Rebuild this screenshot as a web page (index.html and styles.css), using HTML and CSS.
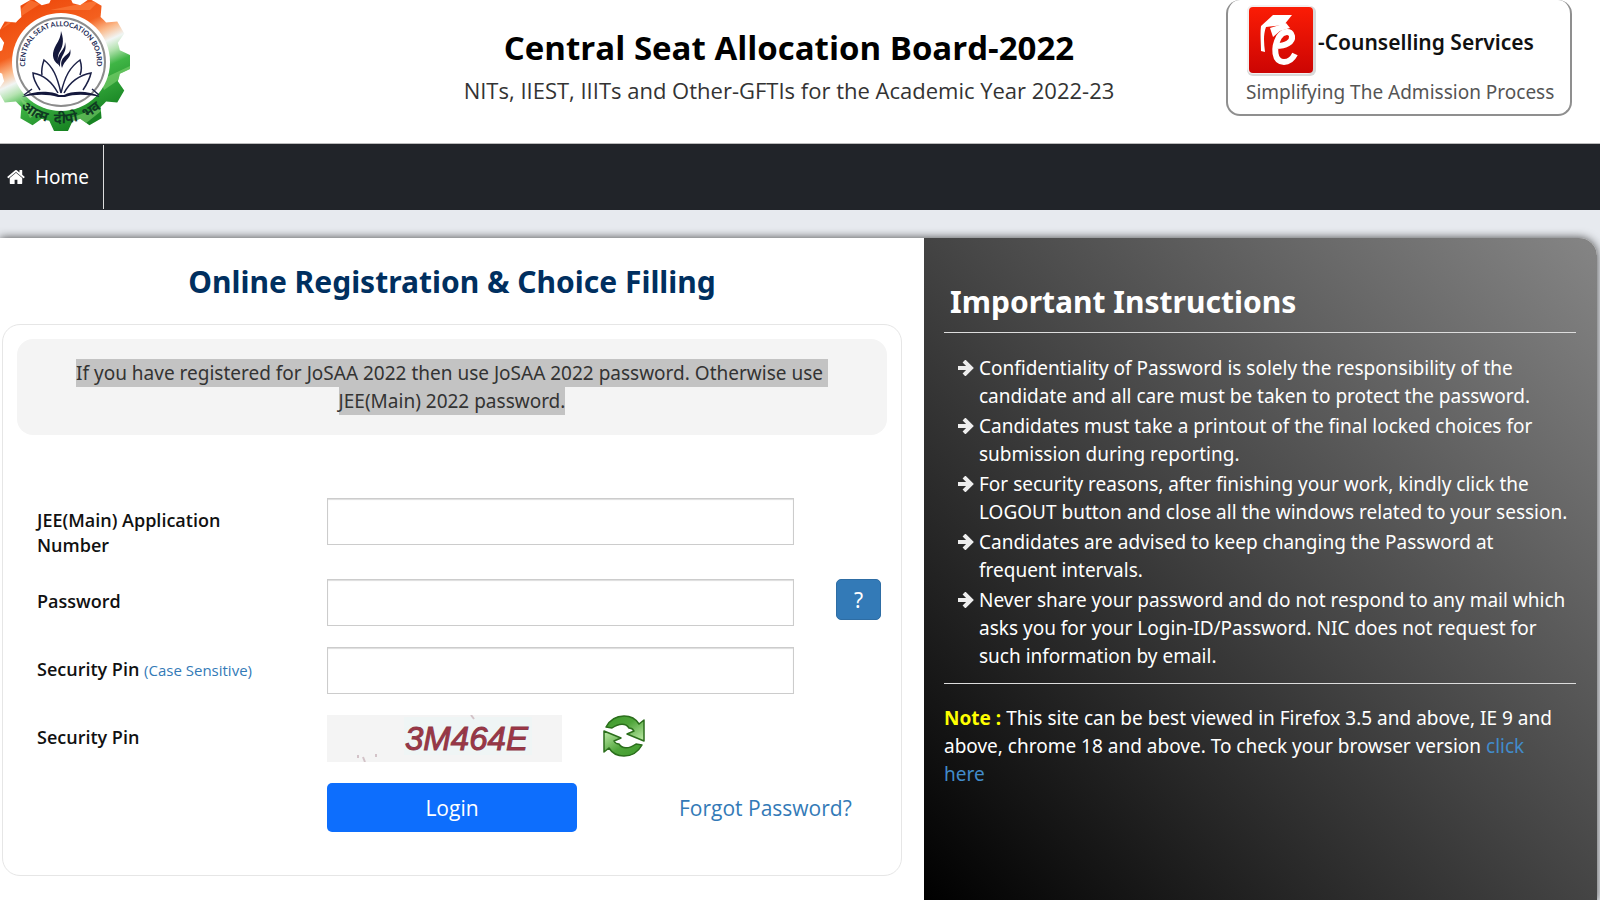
FILE: index.html
```
<!DOCTYPE html>
<html lang="en">

<head>
    <meta charset="UTF-8">
    <title>Central Seat Allocation Board-2022</title>
    <link rel="stylesheet" href="styles.css">
</head>

<body>
<header class="header">
    <svg class="logo" viewBox="0 0 132 132" role="img" aria-label="Central Seat Allocation Board">
        <defs>
            <linearGradient id="tricolor" gradientUnits="userSpaceOnUse" x1="34" y1="3" x2="88" y2="121">
                <stop offset="0" stop-color="#ee4a0c"/>
                <stop offset=".3" stop-color="#f4601f"/>
                <stop offset=".41" stop-color="#fbb98a"/>
                <stop offset=".5" stop-color="#f1f5f4"/>
                <stop offset=".58" stop-color="#b4e3b0"/>
                <stop offset=".68" stop-color="#3fb545"/>
                <stop offset="1" stop-color="#178322"/>
            </linearGradient>
            <path id="tooth" d="M47 8L54 -7H68L75 8Z"/>
            <clipPath id="gear">
                <circle cx="61" cy="62" r="60"/>
                <use href="#tooth"/>
                <use href="#tooth" transform="rotate(30 61 62)"/>
                <use href="#tooth" transform="rotate(60 61 62)"/>
                <use href="#tooth" transform="rotate(90 61 62)"/>
                <use href="#tooth" transform="rotate(120 61 62)"/>
                <use href="#tooth" transform="rotate(150 61 62)"/>
                <use href="#tooth" transform="rotate(180 61 62)"/>
                <use href="#tooth" transform="rotate(210 61 62)"/>
                <use href="#tooth" transform="rotate(240 61 62)"/>
                <use href="#tooth" transform="rotate(270 61 62)"/>
                <use href="#tooth" transform="rotate(300 61 62)"/>
                <use href="#tooth" transform="rotate(330 61 62)"/>
            </clipPath>
            <path id="arc-top" d="M27 74A36 36 0 1 1 95 74"/>
            <path id="arc-bottom" d="M4 84A61 61 0 0 0 118 84"/>
        </defs>
        <g clip-path="url(#gear)">
            <rect x="-10" y="-10" width="142" height="144" fill="url(#tricolor)"/>
            <path d="M0 30L40 4L30 0ZM50 10L100 0L90 10Z" fill="#ff8a4a" opacity=".5"/>
            <path d="M100 80L130 66V72L104 90ZM20 98L40 112L30 118ZM70 118L110 104L80 128Z" fill="#8fdc7c" opacity=".5"/>
        </g>
        <circle cx="61" cy="62" r="49" fill="#fff"/>
        <circle cx="61" cy="62" r="44" fill="#fff" stroke="#8c8c8c" stroke-width="2"/>
        <text class="logo-ring"><textPath href="#arc-top" startOffset="50%">CENTRAL SEAT ALLOCATION BOARD</textPath></text>
        <text class="logo-motto"><textPath href="#arc-bottom" startOffset="50%">आत्म &nbsp;दीपो&nbsp; भव</textPath></text>
        <g fill="#14183c">
            <path d="M61 31C65 42 62 48 59 53C57 58 58 61 59 65C51 60 52 52 56 45C59 40 61 36 61 31Z"/>
            <path d="M65 42C67 49 64 53 62 57C60 61 60 63 60 67C56 61 58 56 61 52C64 48 65 46 65 42Z"/>
            <path d="M70 49C72 55 68 58 66 61C64 63 63 65 62 68C60 62 62 59 65 56C69 53 70 52 70 49Z"/>
            <path d="M22 97C34 90 52 91 59 95H64C72 91 88 90 101 97C86 94 74 94 65 97H58C48 94 36 94 22 97Z"/>
        </g>
        <g fill="none" stroke="#1c2147" stroke-width="1.500">
            <path d="M61 93C57 76 53 67 44 60C42 66 41 70 42 75M61 93C65 76 70 67 80 60C82 66 82 70 80 75"/>
            <path d="M58 93C52 82 44 75 33 73C33 78 36 84 40 90M64 93C70 82 80 75 91 73C90 78 87 84 83 90"/>
            <path d="M24 95L32 89M99 95L92 89"/>
        </g>
    </svg>

    <div class="titles">
        <h1>Central Seat Allocation Board-2022</h1>
        <p>NITs, IIEST, IIITs and Other-GFTIs for the Academic Year 2022-23</p>
    </div>

    <div class="counselling">
        <div class="counselling-name">
            <svg class="e-logo" viewBox="0 0 70 72" aria-hidden="true">
                <defs>
                    <linearGradient id="red" x1="0" y1="0" x2="0" y2="1">
                        <stop offset="0" stop-color="#fb1c05"/>
                        <stop offset="1" stop-color="#cc0503"/>
                    </linearGradient>
                </defs>
                <rect x="1" y="2" width="69" height="70" rx="6" fill="#d9d9d9"/>
                <rect x="1" y="1" width="66" height="69" rx="6" fill="#f3f0f0"/>
                <rect x="3" y="3" width="64" height="66" rx="4" fill="url(#red)"/>
                <path d="M15 22L27 11H46L38 21L20 23C17 31 18 40 19 48L15 47C15 39 14 30 15 22Z" fill="#fff"/>
                <path d="M24 24L40 19L44 24L34 27L27 33Z" fill="#fff"/>
                <path d="M30 42C40 42 47 38 46 32C45 26 37 27 33 33C27 44 28 58 38 58C44 58 47 54 49 50" fill="none" stroke="#fff" stroke-width="6"/>
            </svg>
            <span>-Counselling Services</span>
        </div>
        <div class="counselling-tag">Simplifying The Admission Process</div>
    </div>
</header>

<nav class="nav">
    <a href="#" class="nav-item">
        <svg class="home-icon" viewBox="64 250 1664 1290" aria-hidden="true">
            <path fill="#fff" d="M1472 992v480q0 26-19 45t-45 19h-384v-384h-256v384h-384q-26 0-45-19t-19-45v-480q0-1 .5-3t.5-3l575-474 575 474q1 2 1 6zm223-69l-62 74q-8 9-21 11h-3q-13 0-21-7l-692-577-692 577q-12 8-24 7-13-2-21-11l-62-74q-8-10-7-23.500t11-21.500l719-599q32-26 76-26t76 26l244 204v-195q0-14 9-23t23-9h192q14 0 23 9t9 23v408l219 182q10 8 11 21.500t-7 23.500z"/>
        </svg>
        Home
    </a>
</nav>

<main class="main">
    <section class="login">
        <h2>Online Registration &amp; Choice Filling</h2>
        <div class="panel">
            <p class="hint"><mark>If you have registered for JoSAA 2022 then use JoSAA 2022 password. Otherwise use&nbsp; JEE(Main) 2022 password.</mark></p>
            <form class="form">
                <div class="row">
                    <label for="appno">JEE(Main) Application<br>Number</label>
                    <input type="text" id="appno">
                </div>
                <div class="row">
                    <label for="password">Password</label>
                    <input type="password" id="password">
                    <button type="button" class="help-button">?</button>
                </div>
                <div class="row">
                    <label for="pin">Security Pin <small>(Case Sensitive)</small></label>
                    <input type="text" id="pin">
                </div>
                <div class="row">
                    <span class="label">Security Pin</span>
                    <div class="captcha">
                        <svg class="captcha-image" viewBox="0 0 235 47" role="img" aria-label="Security Pin">
                            <rect width="235" height="47" fill="#f4f4f4"/>
                            <path d="M77 2H205V40H77Z" fill="#eff5f5"/>
                            <path d="M36 42l2 5M31 40v3M49 39v3M144 0l3 4" stroke="#d3c3c8" stroke-width="2"/>
                            <text x="78" y="35" class="captcha-text">3M464E</text>
                        </svg>
                        <button type="button" class="refresh-button" aria-label="Refresh">
                            <svg viewBox="0 0 42 42">
                                <defs>
                                    <linearGradient id="green" x1="0" y1="0" x2="1" y2="1">
                                        <stop offset="0" stop-color="#3f9a2c"/>
                                        <stop offset=".45" stop-color="#4fa53a"/>
                                        <stop offset="1" stop-color="#c2ecab"/>
                                    </linearGradient>
                                    <path id="refresh-arrow" d="M3 12C8 3 14 1 21 1C28 1 33 4 36 9L41 5V26L24 19L31 16C30 14 29 13 26 13C23 8 16 8 9 13Z"/>
                                </defs>
                                <g fill="url(#green)" stroke="#2b6e1c" stroke-width="1.500" stroke-linejoin="round">
                                    <use href="#refresh-arrow"/>
                                    <use href="#refresh-arrow" transform="rotate(180 21 21)"/>
                                </g>
                            </svg>
                        </button>
                    </div>
                </div>
                <div class="row">
                    <div class="actions">
                        <button type="submit" class="login-button">Login</button>
                        <a href="#">Forgot Password?</a>
                    </div>
                </div>
            </form>
        </div>
    </section>

    <aside class="instructions">
        <h2>Important Instructions</h2>
        <svg class="sprite" aria-hidden="true">
            <symbol id="arrow" viewBox="0 0 16 16">
                <path d="M0 8H13M6 1L13 8L6 15" fill="none" stroke="#eee" stroke-width="4"/>
            </symbol>
        </svg>
        <ul>
            <li><svg><use href="#arrow"/></svg>Confidentiality of Password is solely the responsibility of the candidate and all care must be taken to protect the password.</li>
            <li><svg><use href="#arrow"/></svg>Candidates must take a printout of the final locked choices for submission during reporting.</li>
            <li><svg><use href="#arrow"/></svg>For security reasons, after finishing your work, kindly click the LOGOUT button and close all the windows related to your session.</li>
            <li><svg><use href="#arrow"/></svg>Candidates are advised to keep changing the Password at<br>frequent intervals.</li>
            <li><svg><use href="#arrow"/></svg>Never share your password and do not respond to any mail which asks you for your Login-ID/Password. NIC does not request for<br>such information by email.</li>
        </ul>
        <p><b>Note :</b> This site can be best viewed in Firefox 3.5 and above, IE 9 and above, chrome 18 and above. To check your browser version <a href="#">click<br>here</a></p>
    </aside>
</main>
</body>
</html>
```
FILE: styles.css
```
* {
    box-sizing: border-box;
}

body {
    display: flex;
    flex-direction: column;
    min-height: 100vh;
    margin: 0;
    background-color: #e7eaef;
    font-family: "Noto Sans", "Open Sans", sans-serif;
    font-size: 19px;
    line-height: 28px;
    color: #333;
}

h1, h2, p, ul {
    margin: 0;
    padding: 0;
}

a {
    color: #337ab7;
    text-decoration: none;
}

button {
    padding: 0;
    font-family: inherit;
    cursor: pointer;
}

.header {
    display: grid;
    grid-template-columns: 352px 1fr 374px;
    height: 144px;
    background-color: #fff;
    border-bottom: 1px solid #bbb;
}

.logo {
    width: 132px;
    height: 132px;
}

.logo-ring {
    font-family: Lato, sans-serif;
    font-size: 7px;
    font-weight: 700;
    fill: #1c2a55;
    text-anchor: middle;
}

.logo-motto {
    font-family: "Noto Sans", sans-serif;
    font-size: 14px;
    font-weight: 700;
    fill: #0f3a22;
    text-anchor: middle;
}

.titles {
    padding-top: 24px;
    font-family: "Open Sans", sans-serif;
    text-align: center;
}

.titles h1 {
    font-size: 33px;
    font-weight: 700;
    line-height: 48px;
    color: #000;
}

.titles p {
    font-size: 22px;
    line-height: 36px;
}

.counselling {
    height: 116px;
    margin-right: 28px;
    padding: 4px 16px 0 18px;
    border: 2px solid #8f8f8f;
    border-top: none;
    border-radius: 14px;
}

.counselling-name {
    display: flex;
    align-items: center;
    font-size: 21px;
    font-weight: 600;
    color: #111;
}

.counselling-name span {
    padding: 4px 0 0 2px;
}

.e-logo {
    width: 70px;
    height: 72px;
}

.counselling-tag {
    font-size: 19px;
    line-height: 32px;
    color: #555;
    white-space: nowrap;
}

.nav {
    display: flex;
    height: 66px;
    padding: 1px 0;
    background-color: #212429;
}

.nav-item {
    display: flex;
    align-items: center;
    gap: 10px;
    padding: 0 14px 0 7px;
    border-right: 1px solid #ddd;
    color: #fff;
}

.home-icon {
    width: 18px;
    height: 14px;
}

.main {
    display: grid;
    grid-template-columns: 924fr 673fr;
    flex: 1;
    margin: 28px 3px 0 0;
    border-radius: 0 18px 0 0;
    background-color: #fff;
    box-shadow: 0 0 10px #444;
}

.login {
    padding: 20px 22px 25px 2px;
}

.login h2 {
    margin-bottom: 18px;
    font-size: 30px;
    font-weight: 700;
    line-height: 48px;
    text-align: center;
    color: #002f5f;
}

.panel {
    padding: 14px 14px 43px;
    border: 1px solid #e6e6e6;
    border-radius: 18px;
}

.hint {
    padding: 20px 50px;
    border-radius: 16px;
    background-color: #f4f4f4;
    text-align: center;
}

.hint mark {
    padding: 1px 0;
    background-color: #c3c3c3;
    color: #333;
}

.form {
    display: flex;
    flex-direction: column;
    gap: 21px;
    margin-top: 63px;
    padding-left: 20px;
}

.row {
    display: grid;
    grid-template-columns: 290fr 467fr 93fr;
    align-items: start;
}

.row label,
.row .label {
    padding-top: 10px;
    font-family: "Open Sans", sans-serif;
    font-size: 18px;
    font-weight: 600;
    line-height: 25px;
    color: #111;
}

.row small {
    font-size: 15px;
    font-weight: 500;
    color: #337ab7;
}

.row input {
    width: 100%;
    height: 47px;
    padding: 6px 12px;
    border: 1px solid #ccc;
    background-color: #fff;
    box-shadow: inset 0 1px 1px #ddd;
    font-family: inherit;
    font-size: 18px;
}

.help-button {
    justify-self: end;
    width: 45px;
    height: 41px;
    margin-right: 6px;
    border: 1px solid #2e6da4;
    border-radius: 5px;
    background-color: #337ab7;
    color: #fff;
    font-size: 21px;
}

.captcha {
    display: flex;
    align-items: start;
    gap: 41px;
}

.captcha-image {
    width: 235px;
    height: 47px;
}

.captcha-text {
    font-family: "Liberation Sans", sans-serif;
    font-size: 33px;
    font-style: italic;
    fill: #a03545;
    stroke: #8a3a48;
    stroke-width: 1px;
}

.refresh-button {
    width: 42px;
    height: 42px;
    border: none;
    background: none;
}

.actions {
    display: flex;
    grid-column: 2 / 4;
    align-items: center;
    gap: 102px;
    font-family: "Open Sans", sans-serif;
    font-size: 21px;
}

.login-button {
    width: 250px;
    height: 49px;
    border: none;
    border-radius: 5px;
    background-color: #0d6efd;
    color: #fff;
    font-size: 21px;
}

.instructions {
    padding: 40px 21px 24px 20px;
    border-radius: 0 18px 0 0;
    background-image: linear-gradient(45deg, #000, #444 50%, #858585);
    color: #fff;
}

.instructions h2 {
    padding: 0 6px;
    margin-bottom: 6px;
    font-size: 30px;
    font-weight: 700;
    line-height: 48px;
}

.sprite {
    display: none;
}

.instructions ul {
    padding: 21px 0 11px 35px;
    border-top: 1px solid #ddd;
    border-bottom: 1px solid #ddd;
    list-style: none;
}

.instructions li {
    position: relative;
    margin-bottom: 2px;
}

.instructions li svg {
    position: absolute;
    top: 6px;
    left: -21px;
    width: 16px;
    height: 16px;
}

.instructions p {
    padding-top: 20px;
}

.instructions b {
    color: #ff0;
}

.instructions a {
    color: #428bca;
}
```
